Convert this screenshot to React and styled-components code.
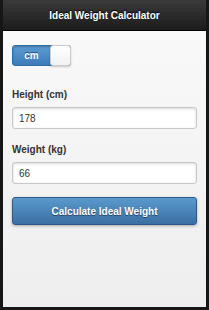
import React, { useState } from "react";
import styled, { createGlobalStyle } from "styled-components";

const GlobalStyle = createGlobalStyle`
  html, body {
    margin: 0;
    padding: 0;
    background: #161616;
  }
  * {
    box-sizing: border-box;
  }
`;

const Frame = styled.div`
  width: 209px;
  height: 310px;
  padding: 0 3px 3px;
  display: flex;
  flex-direction: column;
  font-family: "Liberation Sans", Arial, sans-serif;
`;

const Header = styled.header`
  height: 31px;
  flex: none;
  display: flex;
  align-items: center;
  justify-content: center;
  background: linear-gradient(180deg, #3a3a3a 0%, #1c1c1c 100%);
  border-bottom: 1px solid #000;
`;

const Title = styled.h1`
  margin: 0;
  font-size: 10px;
  font-weight: 700;
  color: #fff;
  text-shadow: 0 -1px 1px #000;
`;

const Content = styled.main`
  flex: 1;
  padding: 14px 9px 0;
  background: linear-gradient(180deg, #f9f9f9 0%, #eeeeee 100%);
`;

const Switch = styled.button`
  display: flex;
  width: 59px;
  height: 21px;
  padding: 0;
  border: 1px solid #2f6ea5;
  border-radius: 3px;
  background: linear-gradient(180deg, #5c9bd1 0%, #3d7cb8 100%);
  box-shadow: inset 0 1px 2px rgba(0, 0, 0, 0.25);
  cursor: pointer;
  overflow: visible;
`;

const SwitchLabel = styled.span`
  flex: 1;
  display: flex;
  align-items: center;
  justify-content: center;
  font-family: "Liberation Sans", Arial, sans-serif;
  font-size: 10px;
  font-weight: 700;
  color: #fff;
  text-shadow: 0 -1px 0 #1f4f7d;
`;

const Knob = styled.span`
  width: 21px;
  height: 21px;
  margin: -1px -1px 0 0;
  border: 1px solid #ccc;
  border-radius: 3px;
  background: linear-gradient(180deg, #ffffff 0%, #f1f1f1 100%);
  box-shadow: 0 1px 2px rgba(0, 0, 0, 0.2);
`;

const Field = styled.div`
  margin-top: ${(p) => p.$top}px;
`;

const Label = styled.label`
  display: block;
  font-size: 10px;
  line-height: 12px;
  font-weight: 700;
  color: #333;
  margin-bottom: 6px;
`;

const Input = styled.input`
  display: block;
  width: 100%;
  height: 22px;
  padding: 0 6px;
  border: 1px solid #c8c8c8;
  border-radius: 3px;
  background: #fff;
  box-shadow: inset 0 1px 3px rgba(0, 0, 0, 0.15);
  font-family: "Liberation Sans", Arial, sans-serif;
  font-size: 10px;
  color: #333;
  outline: none;
`;

const Button = styled.button`
  display: block;
  width: 100%;
  height: 28px;
  margin-top: 13px;
  border: 1px solid #2a5b8c;
  border-radius: 3px;
  background: linear-gradient(180deg, #5a99cc 0%, #3a6fa3 100%);
  box-shadow: 0 1px 3px rgba(0, 0, 0, 0.3);
  font-family: "Liberation Sans", Arial, sans-serif;
  font-size: 10px;
  font-weight: 700;
  color: #fff;
  text-shadow: 0 1px 1px #1f3f60;
  cursor: pointer;
`;

export default function App() {
  const [height, setHeight] = useState("178");
  const [weight, setWeight] = useState("66");

  return (
    <>
      <GlobalStyle />
      <Frame>
        <Header>
          <Title>Ideal Weight Calculator</Title>
        </Header>
        <Content>
          <Switch type="button">
            <SwitchLabel>cm</SwitchLabel>
            <Knob />
          </Switch>
          <Field $top={23}>
            <Label htmlFor="height">Height (cm)</Label>
            <Input id="height" value={height} onChange={(e) => setHeight(e.target.value)} />
          </Field>
          <Field $top={15}>
            <Label htmlFor="weight">Weight (kg)</Label>
            <Input id="weight" value={weight} onChange={(e) => setWeight(e.target.value)} />
          </Field>
          <Button type="button">Calculate Ideal Weight</Button>
        </Content>
      </Frame>
    </>
  );
}
